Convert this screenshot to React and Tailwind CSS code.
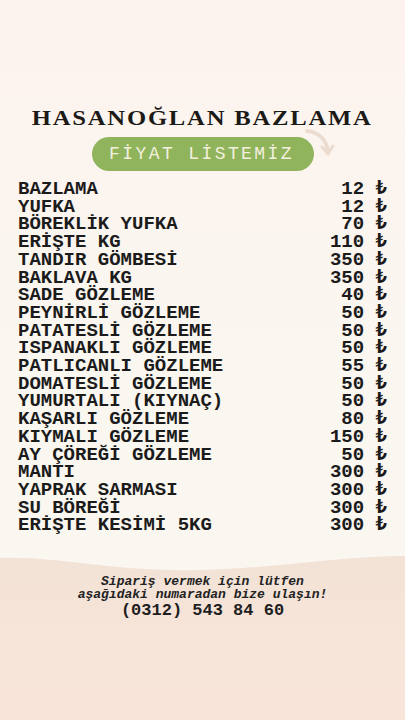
import React from 'react';

const items = [
  ['BAZLAMA', '12'],
  ['YUFKA', '12'],
  ['BÖREKLİK YUFKA', '70'],
  ['ERİŞTE KG', '110'],
  ['TANDIR GÖMBESİ', '350'],
  ['BAKLAVA KG', '350'],
  ['SADE GÖZLEME', '40'],
  ['PEYNİRLİ GÖZLEME', '50'],
  ['PATATESLİ GÖZLEME', '50'],
  ['ISPANAKLI GÖZLEME', '50'],
  ['PATLICANLI GÖZLEME', '55'],
  ['DOMATESLİ GÖZLEME', '50'],
  ['YUMURTALI (KIYNAÇ)', '50'],
  ['KAŞARLI GÖZLEME', '80'],
  ['KIYMALI GÖZLEME', '150'],
  ['AY ÇÖREĞİ GÖZLEME', '50'],
  ['MANTI', '300'],
  ['YAPRAK SARMASI', '300'],
  ['SU BÖREĞİ', '300'],
  ['ERİŞTE KESİMİ 5KG', '300'],
];

const mono = { fontFamily: '"Liberation Mono", "DejaVu Sans Mono", monospace' };

export default function App() {
  return (
    <div className="w-full h-[720px] flex flex-col overflow-hidden bg-gradient-to-b from-[#fdf3ee] via-[#faf6f0] to-[#faf6f0]">
      {/* Title */}
      <div className="pt-[107px] flex justify-center">
        <h1
          className="text-[22px] leading-none font-bold text-[#1c1a17] tracking-[1.6px] scale-x-[1.12]"
          style={{ fontFamily: '"Liberation Serif", "DejaVu Serif", serif' }}
        >
          HASANOĞLAN BAZLAMA
        </h1>
      </div>

      {/* Pill */}
      <div className="mt-[8px] flex justify-center">
        <div className="relative">
          <div
            className="w-[222px] h-[34px] rounded-full bg-[#90b45c] flex items-center justify-center text-[#f4f0df] text-[18px] tracking-[2.4px] pr-[2px]"
            style={mono}
          >
            FİYAT LİSTEMİZ
          </div>
          <svg className="absolute left-[212px] top-[-10px]" width="34" height="36" viewBox="0 0 34 36" fill="none">
            <path d="M3 4 C 14 5, 22 12, 24 24" stroke="#ecdccf" strokeWidth="4" strokeLinecap="round" />
            <path d="M18 20 L 24 27 L 29 19" stroke="#ecdccf" strokeWidth="3" strokeLinecap="round" strokeLinejoin="round" />
          </svg>
        </div>
      </div>

      {/* Menu */}
      <div className="mt-[10px] px-[18px] flex flex-col text-[19px] leading-[17.7px] font-bold text-[#1b1b1b]" style={mono}>
        {items.map(([name, price]) => (
          <div key={name} className="flex justify-between">
            <span>{name}</span>
            <span>{price} ₺</span>
          </div>
        ))}
      </div>

      {/* Footer */}
      <div className="flex-1 flex flex-col mt-[21px]">
        <svg className="block w-full h-[16px]" viewBox="0 0 405 16" preserveAspectRatio="none">
          <path d="M0 2 C 60 0, 110 16, 200 14 C 280 12, 340 0, 405 0 L 405 16 L 0 16 Z" fill="#f3e2d6" />
        </svg>
        <div className="flex-1 flex flex-col items-center bg-gradient-to-b from-[#f3e2d6] via-[#f8e5da] to-[#f8e4d9] pt-[3px]">
          <p className="text-[13px] leading-[13px] italic font-bold text-[#222] text-center" style={mono}>
            Sipariş vermek için lütfen
            <br />
            aşağıdaki numaradan bize ulaşın!
          </p>
          <p className="mt-[1px] text-[17px] leading-[18px] font-bold text-[#1e1e1e]" style={mono}>
            (0312) 543 84 60
          </p>
        </div>
      </div>
    </div>
  );
}
